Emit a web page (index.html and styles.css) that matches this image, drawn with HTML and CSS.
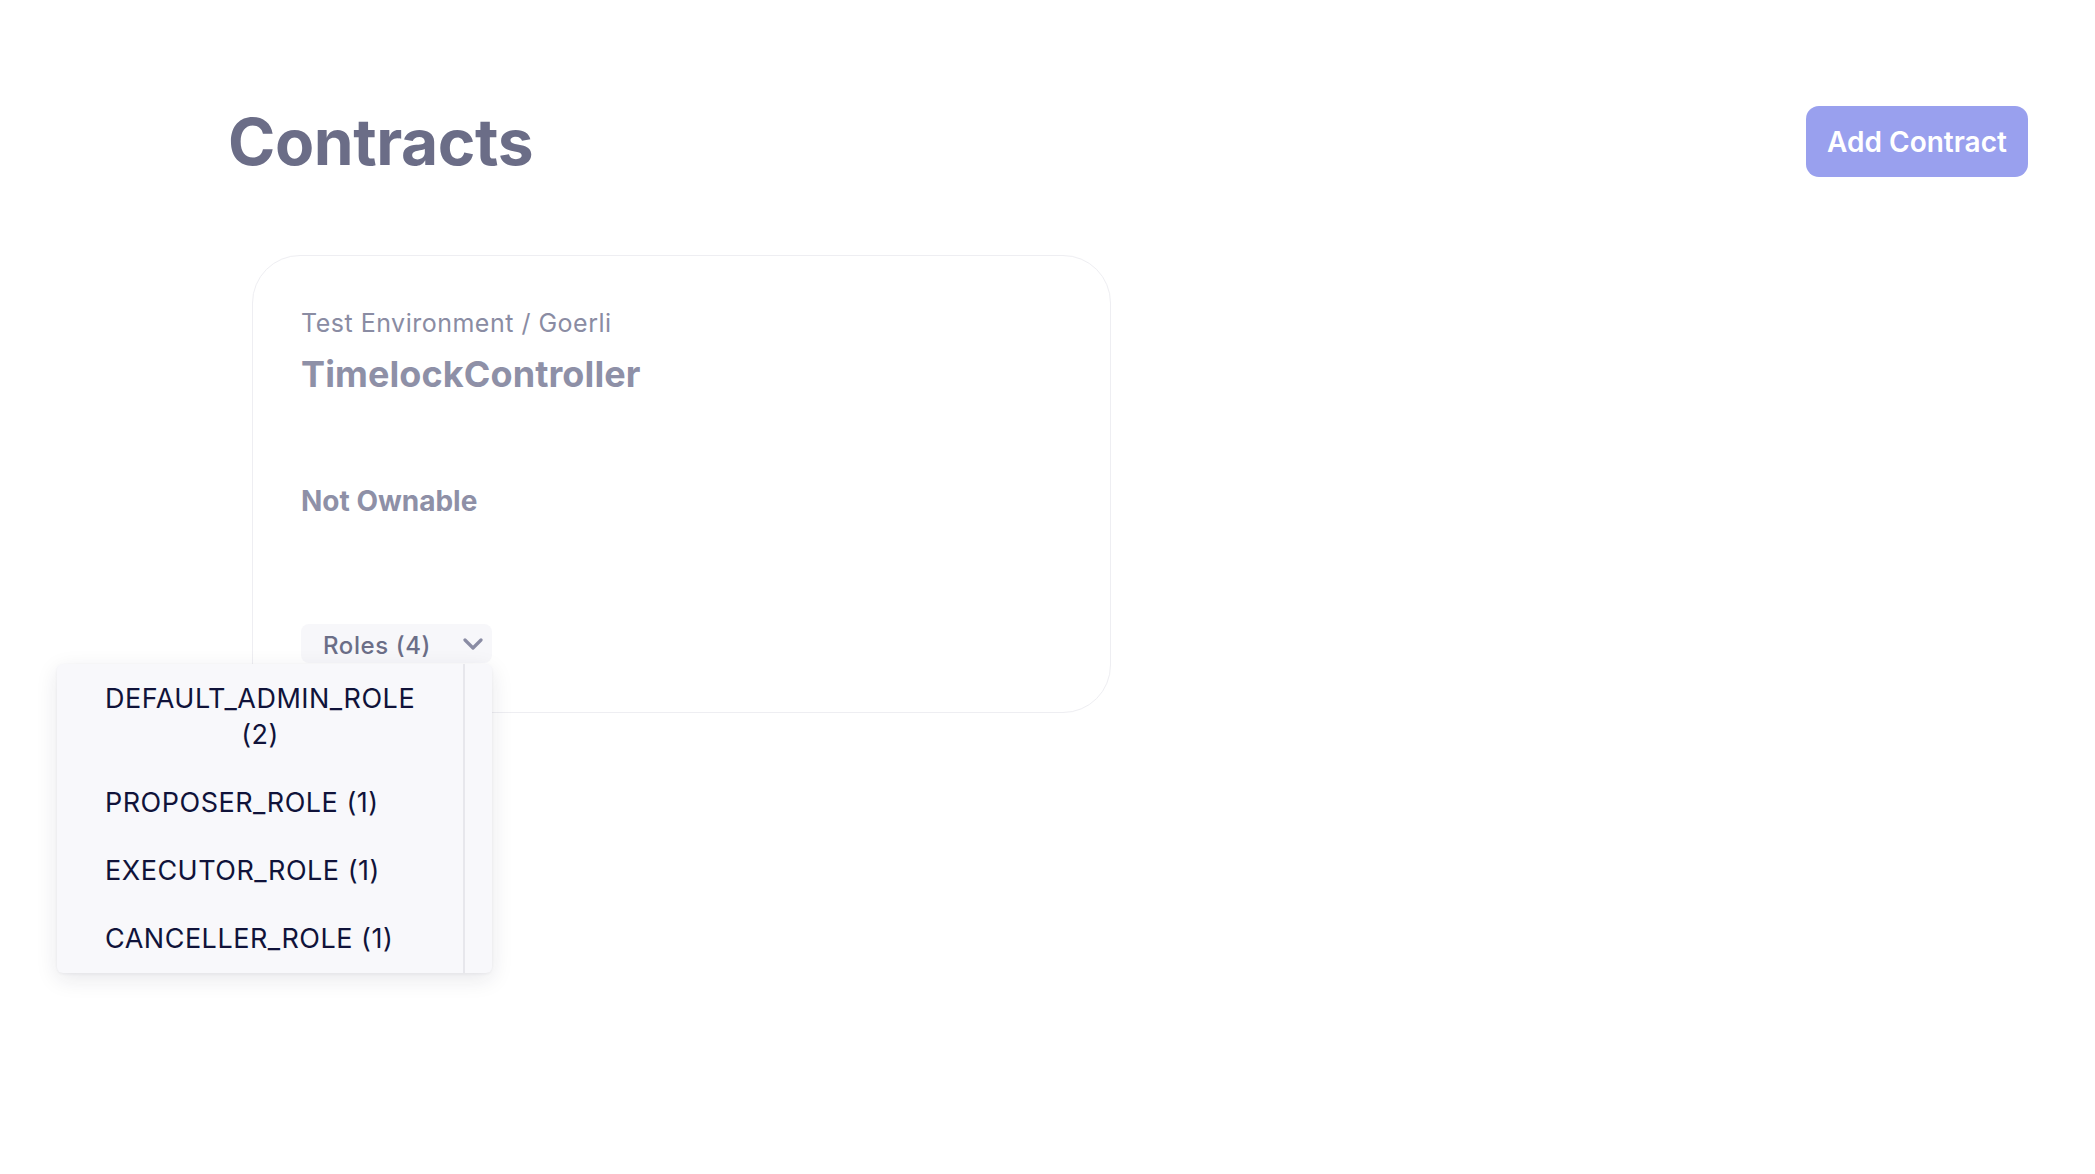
FILE: index.html
```html
<!DOCTYPE html>
<html lang="en">
<head>
<meta charset="utf-8">
<title>Contracts</title>
<link rel="stylesheet" href="styles.css">
</head>
<body>
<div class="page">
  <header class="header">
    <h1 class="title">Contracts</h1>
    <button class="add-btn">Add Contract</button>
  </header>
  <section class="card">
    <div class="card-sub">Test Environment / Goerli</div>
    <div class="card-name">TimelockController</div>
    <div class="card-owner">Not Ownable</div>
    <div class="roles">
      <button class="roles-btn">
        <span class="roles-label">Roles (4)</span>
        <svg class="chev" width="20" height="12" viewBox="0 0 20 12"><path d="M2 2 L10 10 L18 2" fill="none" stroke="#8a8ca4" stroke-width="3.2" stroke-linecap="round" stroke-linejoin="round"/></svg>
      </button>
      <div class="menu">
        <ul class="menu-list">
          <li class="menu-item">DEFAULT_ADMIN_ROLE (2)</li>
          <li class="menu-item">PROPOSER_ROLE (1)</li>
          <li class="menu-item">EXECUTOR_ROLE (1)</li>
          <li class="menu-item">CANCELLER_ROLE (1)</li>
        </ul>
        <div class="menu-track"></div>
      </div>
    </div>
  </section>
</div>
</body>
</html>
```

FILE: styles.css
```css
* { box-sizing: border-box; }
html, body { margin: 0; padding: 0; background: #ffffff; min-height: 100%; }
html { height: 100%; }
body { font-family: Inter, "Noto Sans", sans-serif; min-height: 100vh; }

.page { padding: 106px 67px 0 228px; min-height: 1174px; }

.header {
  display: flex;
  align-items: center;
  justify-content: space-between;
}
.title {
  margin: 0;
  font-size: 64px;
  font-weight: 700;
  color: #6b6d87;
  line-height: 71px;
  letter-spacing: -0.4px;
}
.add-btn {
  height: 71px;
  width: 222px;
  border: none;
  border-radius: 13px;
  background: #99a0ee;
  color: #ffffff;
  font-family: Inter, sans-serif;
  font-size: 28px;
  font-weight: 600;
  padding: 0;
}

.card {
  margin: 78px 0 0 24px;
  width: 859px;
  border: 1px solid #eeeef2;
  border-radius: 48px;
  padding: 49px 48px;
}
.card-sub {
  font-size: 25px;
  line-height: 36px;
  color: #8a8ca3;
  letter-spacing: 0.5px;
}
.card-name {
  margin-top: 11px;
  font-size: 36px;
  line-height: 44px;
  font-weight: 700;
  color: #8e90a7;
  letter-spacing: 0.1px;
}
.card-owner {
  margin-top: 87px;
  font-size: 28px;
  line-height: 36px;
  font-weight: 700;
  color: #8e90a7;
}
.roles {
  position: relative;
  margin-top: 105px;
  width: 191px;
}
.roles-btn {
  display: flex;
  align-items: center;
  justify-content: space-between;
  width: 191px;
  height: 39px;
  padding: 0 9px 0 22px;
  border: none;
  border-radius: 8px;
  background: #f7f7fa;
  font-family: Inter, sans-serif;
  font-size: 24px;
  font-weight: 500;
  color: #6b6e87;
  letter-spacing: 0.6px;
}
.roles-label { padding-top: 3px; }
.chev { display: block; }

.menu {
  position: absolute;
  right: 0;
  top: 40px;
  width: 435px;
  display: flex;
  background: #f8f8fb;
  border-radius: 6px;
  box-shadow: 0 6px 22px rgba(30, 30, 60, 0.10), 0 1px 3px rgba(30, 30, 60, 0.06);
  z-index: 5;
}
.menu-list {
  list-style: none;
  margin: 0;
  padding: 1px 0 0 0;
  width: 406px;
  display: flex;
  flex-direction: column;
  align-items: flex-start;
}
.menu-item {
  padding: 16px 48px;
  font-size: 27px;
  line-height: 36px;
  color: #10133a;
  text-align: center;
  letter-spacing: 0.5px;
}
.menu-track {
  width: 29px;
  border-left: 2px solid #e7e7ec;
}
```
